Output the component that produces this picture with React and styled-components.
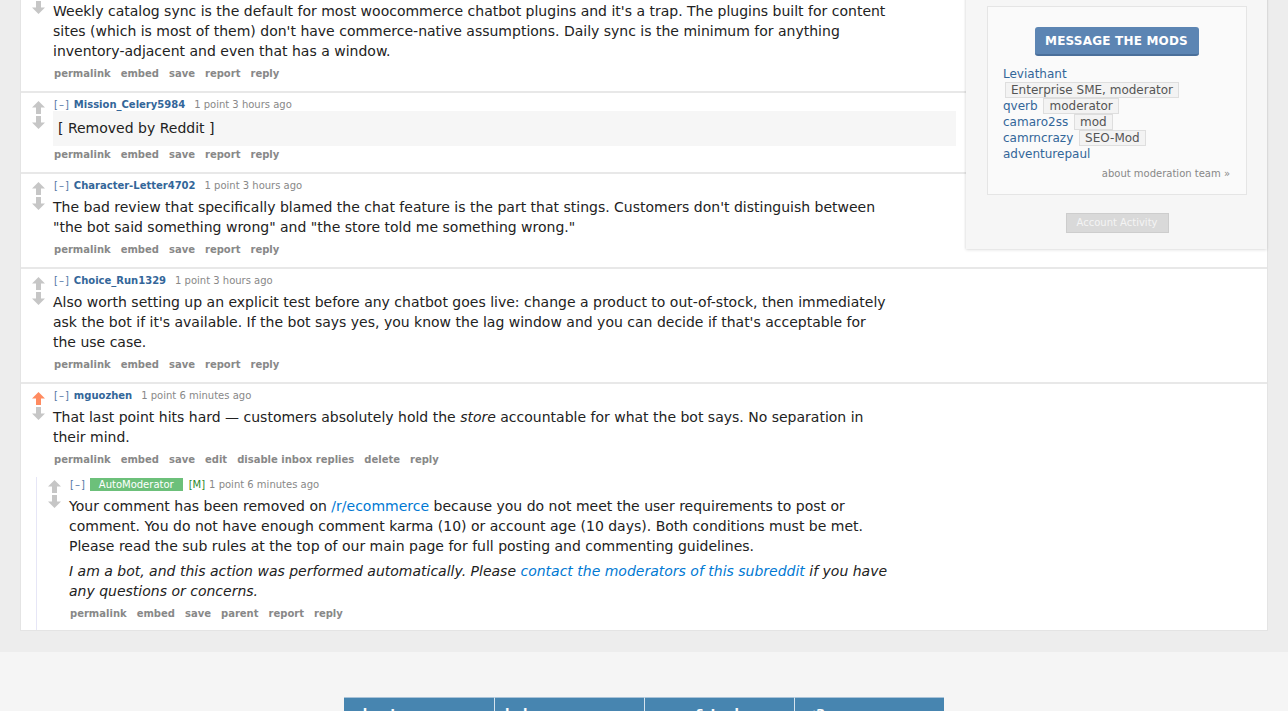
import React from "react";
import styled, { createGlobalStyle } from "styled-components";

const GlobalStyle = createGlobalStyle`
  html, body {
    margin: 0;
    padding: 0;
    background: #ededed;
    overflow: hidden;
  }
  body {
    font-family: "DejaVu Sans", Verdana, sans-serif;
    color: #222;
  }
  a { text-decoration: none; }
`;

const Page = styled.div`
  width: 1288px;
  height: 711px;
  overflow: hidden;
`;

const Panel = styled.div`
  position: relative;
  margin: -23px 20px 0;
  background: #fff;
  border: 1px solid #e4e4e4;
`;

const Comment = styled.div`
  border-top: ${p => (p.$first ? "none" : "2px solid #e8e8e8")};
`;

const Entry = styled.div`
  display: flex;
  align-items: flex-start;
  padding: ${p => (p.$nested ? "1px 0 10px" : "6px 0 11px")} 10px;
`;

const Votes = styled.div`
  display: flex;
  flex-direction: column;
  align-items: center;
  gap: 2px;
  width: 15px;
  margin-top: 2px;
  margin-right: 7px;
  flex-shrink: 0;
`;

const Content = styled.div`
  flex: 1;
  min-width: 0;
`;

const Tagline = styled.div`
  font-size: 10px;
  line-height: 12px;
  color: #888;
  display: flex;
  align-items: center;
  white-space: nowrap;
`;

const Expand = styled.span`
  color: #5577a6;
  letter-spacing: 1px;
  margin-left: 1px;
  margin-right: 4px;
`;

const Author = styled.a`
  color: #369;
  font-weight: bold;
  margin-right: 9px;
`;

const ModBadge = styled.span`
  background: #6cc07a;
  color: #fff;
  padding: 0 9px;
  margin-right: 6px;
  line-height: 13px;
`;

const ModTag = styled.span`
  color: #2d8a2d;
  margin-right: 4px;
`;

const Body = styled.div`
  max-width: 840px;
  margin: 5px 0 7px;
  font-size: 14px;
  line-height: 20px;
  color: #222;

  p {
    margin: 0;
  }
  p + p {
    margin-top: 5px;
  }
  a {
    color: #0079d3;
  }
`;

const Removed = styled.div`
  width: 893px;
  margin: 0 0 3px;
  padding: 7px 5px 8px;
  background: #f6f6f6;
  font-size: 14px;
  line-height: 20px;
  color: #222;
`;

const Buttons = styled.ul`
  display: flex;
  gap: 10px;
  list-style: none;
  margin: 0;
  padding: 0 0 0 1px;
  font-size: 10px;
  line-height: 12px;
`;

const ButtonLink = styled.li`
  color: #888;
  font-weight: bold;
`;

const Child = styled.div`
  margin-left: 15px;
  border-left: 1px solid #e6e6f6;
`;

const Sidebar = styled.aside`
  position: absolute;
  top: 12px;
  right: 0;
  width: 301px;
  box-sizing: border-box;
  padding: 16px 20px 16px 21px;
  background: #f6f6f6;
  box-shadow: 0 1px 3px rgba(0, 0, 0, 0.12), -1px 0 2px rgba(0, 0, 0, 0.05);
  display: flex;
  flex-direction: column;
  align-items: center;
`;

const ModBox = styled.div`
  align-self: stretch;
  background: #fafafa;
  border: 1px solid #e5e5e5;
  padding: 20px 16px 14px 15px;
  display: flex;
  flex-direction: column;
`;

const MessageButton = styled.div`
  align-self: center;
  width: 164px;
  height: 29px;
  box-sizing: border-box;
  border-radius: 3px;
  background: #5c85b3;
  border-bottom: 2px solid #4a6f9a;
  color: #fff;
  font-weight: bold;
  font-size: 12px;
  line-height: 28px;
  text-align: center;
  letter-spacing: 0.2px;
`;

const ModList = styled.ul`
  list-style: none;
  margin: 10px 0 0;
  padding: 0;
  font-size: 12px;
  line-height: 16px;
`;

const ModItem = styled.li`
  color: #369;
`;

const Flair = styled.span`
  display: inline-block;
  margin-left: 2px;
  padding: 0 5px;
  background: #f3f3f3;
  border: 1px solid #dedede;
  color: #555;
  line-height: 14px;
  vertical-align: top;
`;

const AboutTeam = styled.div`
  align-self: flex-end;
  margin-top: 6px;
  font-size: 10px;
  line-height: 12px;
  color: #888;
`;

const ActivityButton = styled.div`
  margin-top: 18px;
  width: 103px;
  height: 20px;
  box-sizing: border-box;
  background: #d9d9d9;
  border: 1px solid #cdcdcd;
  color: #f4f4f4;
  font-size: 10px;
  line-height: 18px;
  text-align: center;
`;

const Gap = styled.div`
  height: 21px;
`;

const Footer = styled.footer`
  background: #f5f5f5;
  padding-top: 45px;
  display: flex;
  justify-content: center;
  height: 300px;
`;

const FooterCols = styled.div`
  display: flex;
`;

const FooterCol = styled.div`
  width: 150px;
  box-sizing: border-box;
  border-left: ${p => (p.$first ? "none" : "1px solid #d6e3ee")};
  border-top: 1px solid #a9c3d8;
  background: #4785b0;
  color: #fff;
  font-weight: bold;
  font-size: 13px;
  line-height: 20px;
  padding: 6px 10px;
`;

const Arrow = ({ down, active }) => (
  <svg width="15" height="13" viewBox="0 0 15 13">
    <path
      d="M7.5 0 L14 6.5 L10 6.5 L10 13 L5 13 L5 6.5 L1 6.5 Z"
      fill={active ? "#ff8b60" : "#c6c6c6"}
      transform={down ? "rotate(180 7.5 6.5)" : undefined}
    />
  </svg>
);

const VoteArrows = ({ up }) => (
  <Votes>
    <Arrow active={up} />
    <Arrow down />
  </Votes>
);

const ActionList = ({ items }) => (
  <Buttons>
    {items.map(item => (
      <ButtonLink key={item}>{item}</ButtonLink>
    ))}
  </Buttons>
);

const STD = ["permalink", "embed", "save", "report", "reply"];

const comments = [
  {
    author: "Mission_Celery5984",
    time: "1 point 3 hours ago",
    removed: true,
  },
  {
    author: "Character-Letter4702",
    time: "1 point 3 hours ago",
    text: [
      "The bad review that specifically blamed the chat feature is the part that stings. Customers don't distinguish between \"the bot said something wrong\" and \"the store told me something wrong.\"",
    ],
  },
  {
    author: "Choice_Run1329",
    time: "1 point 3 hours ago",
    text: [
      "Also worth setting up an explicit test before any chatbot goes live: change a product to out-of-stock, then immediately ask the bot if it's available. If the bot says yes, you know the lag window and you can decide if that's acceptable for the use case.",
    ],
  },
];

const mods = [
  { name: "Leviathant", flair: "Enterprise SME, moderator" },
  { name: "qverb", flair: "moderator" },
  { name: "camaro2ss", flair: "mod" },
  { name: "camrncrazy", flair: "SEO-Mod" },
  { name: "adventurepaul" },
];

export default function App() {
  return (
    <Page>
      <GlobalStyle />
      <Panel>
        <Comment $first>
          <Entry>
            <VoteArrows />
            <Content>
              <Tagline>
                <Expand>[–]</Expand>
                <Author>woo_dev_notes</Author>
                1 point 3 hours ago
              </Tagline>
              <Body>
                <p>
                  Weekly catalog sync is the default for most woocommerce chatbot plugins and it's a trap. The
                  plugins built for content sites (which is most of them) don't have commerce-native assumptions.
                  Daily sync is the minimum for anything inventory-adjacent and even that has a window.
                </p>
              </Body>
              <ActionList items={STD} />
            </Content>
          </Entry>
        </Comment>

        {comments.map(c => (
          <Comment key={c.author}>
            <Entry>
              <VoteArrows />
              <Content>
                <Tagline>
                  <Expand>[–]</Expand>
                  <Author>{c.author}</Author>
                  {c.time}
                </Tagline>
                {c.removed ? (
                  <Removed>[ Removed by Reddit ]</Removed>
                ) : (
                  <Body>
                    {c.text.map((t, i) => (
                      <p key={i}>{t}</p>
                    ))}
                  </Body>
                )}
                <ActionList items={STD} />
              </Content>
            </Entry>
          </Comment>
        ))}

        <Comment>
          <Entry>
            <VoteArrows up />
            <Content>
              <Tagline>
                <Expand>[–]</Expand>
                <Author>mguozhen</Author>
                1 point 6 minutes ago
              </Tagline>
              <Body>
                <p>
                  That last point hits hard — customers absolutely hold the <em>store</em> accountable for what the
                  bot says. No separation in their mind.
                </p>
              </Body>
              <ActionList items={["permalink", "embed", "save", "edit", "disable inbox replies", "delete", "reply"]} />
            </Content>
          </Entry>
          <Child>
            <Comment $first>
              <Entry $nested>
                <VoteArrows />
                <Content>
                  <Tagline>
                    <Expand>[–]</Expand>
                    <ModBadge>AutoModerator</ModBadge>
                    <ModTag>[M]</ModTag>
                    1 point 6 minutes ago
                  </Tagline>
                  <Body>
                    <p>
                      Your comment has been removed on <a>/r/ecommerce</a> because you do not meet the user
                      requirements to post or comment. You do not have enough comment karma (10) or account age (10
                      days). Both conditions must be met. Please read the sub rules at the top of our main page for
                      full posting and commenting guidelines.
                    </p>
                    <p>
                      <em>
                        I am a bot, and this action was performed automatically. Please{" "}
                        <a>contact the moderators of this subreddit</a> if you have any questions or concerns.
                      </em>
                    </p>
                  </Body>
                  <ActionList items={["permalink", "embed", "save", "parent", "report", "reply"]} />
                </Content>
              </Entry>
            </Comment>
          </Child>
        </Comment>

        <Sidebar>
          <ModBox>
            <MessageButton>MESSAGE THE MODS</MessageButton>
            <ModList>
              {mods.map(m => (
                <ModItem key={m.name}>
                  {m.name}
                  {m.flair && (
                    <>
                      {" "}
                      <Flair>{m.flair}</Flair>
                    </>
                  )}
                </ModItem>
              ))}
            </ModList>
            <AboutTeam>about moderation team »</AboutTeam>
          </ModBox>
          <ActivityButton>Account Activity</ActivityButton>
        </Sidebar>
      </Panel>
      <Gap />
      <Footer>
        <FooterCols>
          <FooterCol $first>about</FooterCol>
          <FooterCol>help</FooterCol>
          <FooterCol>apps &amp; tools</FooterCol>
          <FooterCol>&lt;3</FooterCol>
        </FooterCols>
      </Footer>
    </Page>
  );
}
